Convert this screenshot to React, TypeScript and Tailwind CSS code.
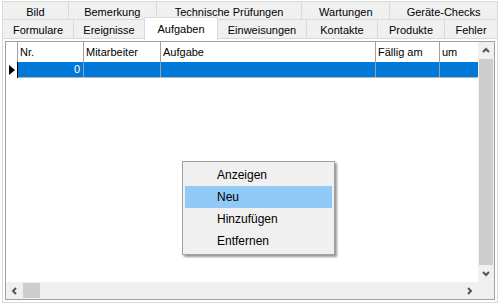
import { ReactNode } from 'react';

const rowOne = [
    { label: 'Bild', w: 'w-[66px]' },
    { label: 'Bemerkung', w: 'w-[88px]' },
    { label: 'Technische Prüfungen', w: 'w-[146px]' },
    { label: 'Wartungen', w: 'w-[88px]' },
    { label: 'Geräte-Checks', w: 'w-[108px]' },
];

const rowTwo = [
    { label: 'Formulare', w: 'w-[71px]' },
    { label: 'Ereignisse', w: 'w-[71px]' },
    { label: 'Aufgaben', w: 'w-[74px]', active: true },
    { label: 'Einweisungen', w: 'w-[89px]' },
    { label: 'Kontakte', w: 'w-[71px]' },
    { label: 'Produkte', w: 'w-[67px]' },
    { label: 'Fehler', w: 'flex-1' },
];

const columns = [
    { label: 'Nr.', w: 'w-[66px] border-r' },
    { label: 'Mitarbeiter', w: 'w-[77px] border-r' },
    { label: 'Aufgabe', w: 'w-[215px] border-r' },
    { label: 'Fällig am', w: 'w-[64px] border-r' },
    { label: 'um', w: 'flex-1' },
];

const menuItems = ['Anzeigen', 'Neu', 'Hinzufügen', 'Entfernen'];

function Chevron({ dir }: { dir: 'up' | 'down' | 'left' | 'right' }) {
    const points = {
        up: '1,5 4,2 7,5',
        down: '1,2 4,5 7,2',
        left: '5,1 2,4 5,7',
        right: '2,1 5,4 2,7',
    }[dir];
    const vertical = dir === 'up' || dir === 'down';
    return (
        <svg width={vertical ? 8 : 7} height={vertical ? 7 : 8} viewBox={vertical ? '0 0 8 7' : '0 0 7 8'}>
            <polyline points={points} fill="none" stroke="#555" strokeWidth="2" />
        </svg>
    );
}

function ArrowBox({ children, className }: { children: ReactNode; className: string }) {
    return <div className={`flex items-center justify-center shrink-0 ${className}`}>{children}</div>;
}

export default function App() {
    return (
        <div className="relative w-[500px] h-[305px] bg-white overflow-hidden font-['Liberation_Sans',Arial,sans-serif] text-[11px] text-black">
            {/* Tab headers */}
            <div className="ml-[2px] mt-[1px] flex h-[18px] w-[496px] border-l border-t border-[#d9d9d9]">
                {rowOne.map((t) => (
                    <div
                        key={t.label}
                        className={`${t.w} flex items-center justify-center pt-[4px] bg-[#f0f0f0] border-r border-[#d9d9d9]`}
                    >
                        {t.label}
                    </div>
                ))}
            </div>
            <div className="ml-[2px] flex h-[19px] w-[496px] border-l border-t border-[#d9d9d9]">
                {rowTwo.map((t) =>
                    t.active ? (
                        <div
                            key={t.label}
                            className={`${t.w} relative z-10 -mt-[3px] -ml-[1px] h-[23px] flex justify-center pt-[3px] bg-white border-x border-t border-[#d9d9d9]`}
                        >
                            {t.label}
                        </div>
                    ) : (
                        <div
                            key={t.label}
                            className={`${t.w} flex items-center justify-center pt-[3px] bg-[#f0f0f0] border-r border-[#d9d9d9]`}
                        >
                            {t.label}
                        </div>
                    )
                )}
            </div>

            {/* Tab page */}
            <div className="ml-[2px] w-[496px] h-[265px] border border-[#d9d9d9] bg-white p-[2px]">
                <div className="h-full flex flex-col border border-[#a0a0a0]">
                    <div className="flex h-[240px]">
                        <div className="flex-1 flex flex-col bg-white">
                            {/* header */}
                            <div className="flex h-[20px] shrink-0">
                                <div className="w-[12px] border-r border-[#a0a0a0]" />
                                {columns.map((c) => (
                                    <div key={c.label} className={`${c.w} border-[#a0a0a0] flex items-center pl-[2px] pt-[1px]`}>
                                        {c.label}
                                    </div>
                                ))}
                            </div>
                            {/* selected row */}
                            <div className="flex h-[16px] shrink-0">
                                <div className="w-[12px] flex items-center pl-[3px] border-r border-black">
                                    <svg width="6" height="10" viewBox="0 0 6 10">
                                        <polygon points="0,0 6,5 0,10" fill="#000" />
                                    </svg>
                                </div>
                                <div className="flex-1 flex bg-[#0078d7] border-b border-[#b5b5b5] text-white">
                                    <div className="w-[66px] border-r border-[#a0a0a0] flex items-center justify-end pr-[3px]">0</div>
                                    <div className="w-[77px] border-r border-[#a0a0a0]" />
                                    <div className="w-[215px] border-r border-[#a0a0a0]" />
                                    <div className="w-[64px] border-r border-[#a0a0a0]" />
                                    <div className="flex-1" />
                                </div>
                            </div>
                        </div>
                        {/* vertical scrollbar */}
                        <div className="w-[16px] flex flex-col bg-[#f0f0f0]">
                            <ArrowBox className="h-[17px]">
                                <Chevron dir="up" />
                            </ArrowBox>
                            <div className="flex-1 mx-[1px] bg-[#cdcdcd]" />
                            <ArrowBox className="h-[17px]">
                                <Chevron dir="down" />
                            </ArrowBox>
                        </div>
                    </div>
                    {/* horizontal scrollbar */}
                    <div className="flex flex-1 bg-[#f0f0f0]">
                        <ArrowBox className="w-[17px]">
                            <Chevron dir="left" />
                        </ArrowBox>
                        <div className="w-[17px] my-[1px] bg-[#cdcdcd]" />
                        <div className="flex-1" />
                        <ArrowBox className="w-[17px]">
                            <Chevron dir="right" />
                        </ArrowBox>
                        <div className="w-[16px]" />
                    </div>
                </div>
            </div>

            {/* Context menu */}
            <div className="absolute left-[182px] top-[161px] w-[153px] p-[2px] bg-[#f0f0f0] border border-[#a0a0a0] shadow-[2px_2px_2px_rgba(0,0,0,0.4)] text-[12px]">
                {menuItems.map((m) => (
                    <div
                        key={m}
                        className={`h-[22px] flex items-center pl-[32px] ${m === 'Neu' ? 'bg-[#91c9f7]' : ''}`}
                    >
                        {m}
                    </div>
                ))}
            </div>
        </div>
    );
}
